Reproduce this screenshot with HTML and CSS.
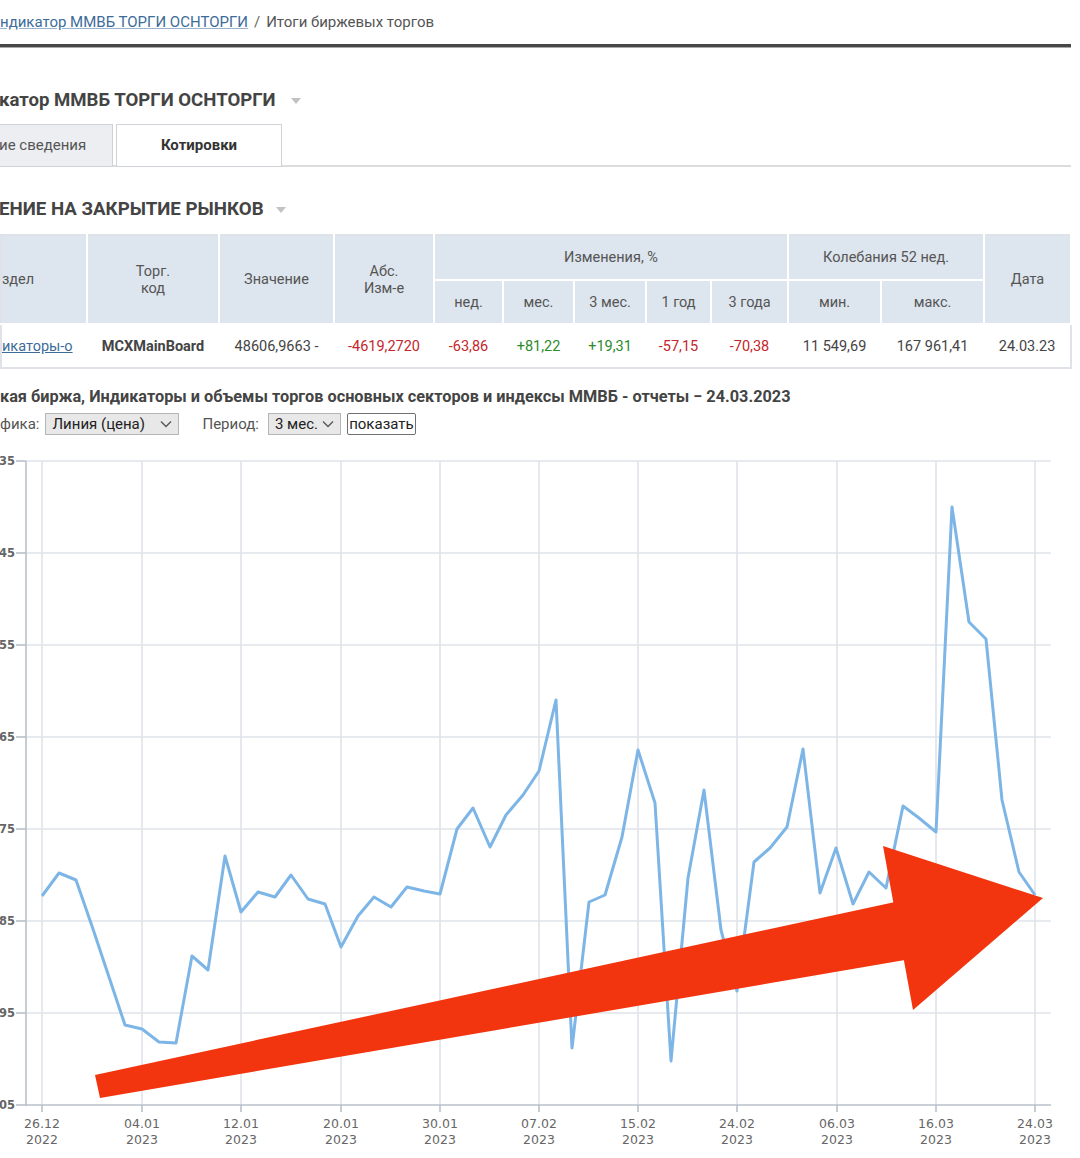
FILE: index.html
```html
<!DOCTYPE html>
<html lang="ru">
<head>
<meta charset="utf-8">
<title>Итоги биржевых торгов</title>
<link rel="stylesheet" href="styles.css">
</head>
<body>
<div class="page">
  <div class="crumbs"><a href="#" class="crumb-link">ндикатор ММВБ ТОРГИ ОСНТОРГИ</a><span class="sep">/</span><span class="crumb-cur">Итоги биржевых торгов</span></div>
  <div class="rule"></div>

  <h1 class="title">катор ММВБ ТОРГИ ОСНТОРГИ <span class="caret"></span></h1>

  <div class="tabs">
    <div class="tab">ие сведения</div>
    <div class="tab tab-active">Котировки</div>
  </div>

  <h2 class="section">ЕНИЕ НА ЗАКРЫТИЕ РЫНКОВ <span class="caret caret-sm"></span></h2>

  <table class="quotes">
    <colgroup>
      <col class="c86"><col class="c132"><col class="c115"><col class="c100"><col class="c69"><col class="c71"><col class="c72"><col class="c65"><col class="c77"><col class="c93"><col class="c103"><col class="c87">
    </colgroup>
    <thead>
      <tr class="hrow1">
        <th rowspan="2" class="first">здел</th>
        <th rowspan="2">Торг.<br>код</th>
        <th rowspan="2">Значение</th>
        <th rowspan="2">Абс.<br>Изм-е</th>
        <th colspan="5">Изменения, %</th>
        <th colspan="2">Колебания 52 нед.</th>
        <th rowspan="2">Дата</th>
      </tr>
      <tr class="hrow2">
        <th>нед.</th><th>мес.</th><th>3 мес.</th><th>1 год</th><th>3 года</th><th>мин.</th><th>макс.</th>
      </tr>
    </thead>
    <tbody>
      <tr>
        <td class="first"><a href="#" class="row-link">икаторы-о</a></td>
        <td class="bold">MCXMainBoard</td>
        <td>48606,9663 -</td>
        <td class="neg">-4619,2720</td>
        <td class="neg">-63,86</td>
        <td class="pos">+81,22</td>
        <td class="pos">+19,31</td>
        <td class="neg">-57,15</td>
        <td class="neg">-70,38</td>
        <td>11 549,69</td>
        <td>167 961,41</td>
        <td>24.03.23</td>
      </tr>
    </tbody>
  </table>

  <div class="caption">кая биржа, Индикаторы и объемы торгов основных секторов и индексы ММВБ - отчеты − 24.03.2023</div>

  <div class="controls">
    <span class="lbl">фика:</span>
    <span class="sel sel-type">Линия (цена)<svg class="chev" viewBox="0 0 12 8" width="12" height="8"><path d="M1 1.5 L6 6.5 L11 1.5" fill="none" stroke="#555" stroke-width="1.3"/></svg></span>
    <span class="lbl lbl-period">Период:</span>
    <span class="sel sel-period">3 мес.<svg class="chev" viewBox="0 0 12 8" width="12" height="8"><path d="M1 1.5 L6 6.5 L11 1.5" fill="none" stroke="#555" stroke-width="1.3"/></svg></span>
    <button class="btn" type="button">показать</button>
  </div>

  <svg class="chart" width="1080" height="718" viewBox="0 440 1080 718" xmlns="http://www.w3.org/2000/svg">
    <g stroke="#dfe4ea" stroke-width="1.6">
      <line x1="26" y1="461" x2="1051" y2="461"/>
      <line x1="26" y1="553" x2="1051" y2="553"/>
      <line x1="26" y1="645" x2="1051" y2="645"/>
      <line x1="26" y1="737" x2="1051" y2="737"/>
      <line x1="26" y1="829" x2="1051" y2="829"/>
      <line x1="26" y1="921" x2="1051" y2="921"/>
      <line x1="26" y1="1013" x2="1051" y2="1013"/>
      <line x1="42" y1="461" x2="42" y2="1105"/>
      <line x1="142" y1="461" x2="142" y2="1105"/>
      <line x1="241" y1="461" x2="241" y2="1105"/>
      <line x1="341" y1="461" x2="341" y2="1105"/>
      <line x1="440" y1="461" x2="440" y2="1105"/>
      <line x1="539" y1="461" x2="539" y2="1105"/>
      <line x1="638" y1="461" x2="638" y2="1105"/>
      <line x1="737" y1="461" x2="737" y2="1105"/>
      <line x1="837" y1="461" x2="837" y2="1105"/>
      <line x1="936" y1="461" x2="936" y2="1105"/>
      <line x1="1035" y1="461" x2="1035" y2="1105"/>
    </g>
    <g stroke="#b9c1cb" stroke-width="1.6">
      <line x1="26" y1="461" x2="26" y2="1106"/>
      <line x1="26" y1="1105" x2="1051" y2="1105"/>
      <line x1="16" y1="461" x2="26" y2="461"/>
      <line x1="16" y1="553" x2="26" y2="553"/>
      <line x1="16" y1="645" x2="26" y2="645"/>
      <line x1="16" y1="737" x2="26" y2="737"/>
      <line x1="16" y1="829" x2="26" y2="829"/>
      <line x1="16" y1="921" x2="26" y2="921"/>
      <line x1="16" y1="1013" x2="26" y2="1013"/>
      <line x1="16" y1="1105" x2="26" y2="1105"/>
      <line x1="42" y1="1105" x2="42" y2="1112"/>
      <line x1="142" y1="1105" x2="142" y2="1112"/>
      <line x1="241" y1="1105" x2="241" y2="1112"/>
      <line x1="341" y1="1105" x2="341" y2="1112"/>
      <line x1="440" y1="1105" x2="440" y2="1112"/>
      <line x1="539" y1="1105" x2="539" y2="1112"/>
      <line x1="638" y1="1105" x2="638" y2="1112"/>
      <line x1="737" y1="1105" x2="737" y2="1112"/>
      <line x1="837" y1="1105" x2="837" y2="1112"/>
      <line x1="936" y1="1105" x2="936" y2="1112"/>
      <line x1="1035" y1="1105" x2="1035" y2="1112"/>
    </g>
    <g class="ylab" text-anchor="end">
      <text x="15" y="465">35</text>
      <text x="15" y="557">45</text>
      <text x="15" y="649">55</text>
      <text x="15" y="741">65</text>
      <text x="15" y="833">75</text>
      <text x="15" y="925">85</text>
      <text x="15" y="1017">95</text>
      <text x="15" y="1109">05</text>
    </g>
    <g class="xlab" text-anchor="middle">
      <text x="42" y="1128">26.12</text><text x="42" y="1144">2022</text>
      <text x="142" y="1128">04.01</text><text x="142" y="1144">2023</text>
      <text x="241" y="1128">12.01</text><text x="241" y="1144">2023</text>
      <text x="341" y="1128">20.01</text><text x="341" y="1144">2023</text>
      <text x="440" y="1128">30.01</text><text x="440" y="1144">2023</text>
      <text x="539" y="1128">07.02</text><text x="539" y="1144">2023</text>
      <text x="638" y="1128">15.02</text><text x="638" y="1144">2023</text>
      <text x="737" y="1128">24.02</text><text x="737" y="1144">2023</text>
      <text x="837" y="1128">06.03</text><text x="837" y="1144">2023</text>
      <text x="936" y="1128">16.03</text><text x="936" y="1144">2023</text>
      <text x="1035" y="1128">24.03</text><text x="1035" y="1144">2023</text>
    </g>
    <polyline fill="none" stroke="#7db6e6" stroke-width="3" stroke-linejoin="round"
      points="42,896 59,873 76,880 93,929 109,977 125,1025 142,1029 159,1042 176,1043 192,956 208,970 225,856 241,912 258,892 275,897 291,875 308,899 325,904 341,947 358,916 374,897 391,907 407,887 424,891 440,894 457,829 473,808 490,847 506,815 523,795 539,771 556,700 572,1048 589,902 605,895 622,837 638,750 655,803 671,1061 688,878 704,790 721,930 737,991 754,862 770,848 787,827 803,749 820,893 836,848 853,904 869,872 886,888 903,806 919,818 936,832 952,507 969,622 986,639 1002,800 1019,872 1035,895"/>
    <g fill="#f2350f">
      <polygon points="95,1075 895,902 905,960 100,1098"/>
      <polygon points="883,846 1043,898 913,1010"/>
    </g>
  </svg>
</div>
</body>
</html>
```
FILE: styles.css
```css
html, body {
  margin: 0;
  padding: 0;
  background: #ffffff;
}
body {
  width: 1080px;
  overflow: hidden;
  font-family: Roboto, "Noto Sans", "Liberation Sans", sans-serif;
  color: #333333;
}
.page {
  width: 1080px;
}
.crumbs {
  height: 44px;
  line-height: 44px;
  font-size: 15px;
  color: #555555;
  white-space: nowrap;
}
.crumb-link {
  color: #3d6c99;
  text-decoration: underline;
  text-decoration-color: #9ab2cc;
}
.sep {
  margin: 0 6px;
  color: #666666;
}
.crumb-cur {
  color: #555555;
}
.rule {
  height: 3px;
  background: #474747;
  margin-right: 9px;
  box-shadow: 0 1px 0 #a9a9a9;
}
.title {
  margin: 41px 0 0 -1px;
  height: 24px;
  line-height: 24px;
  font-size: 18.6px;
  font-weight: 700;
  color: #444444;
  white-space: nowrap;
}
.caret {
  display: inline-block;
  width: 0;
  height: 0;
  border-left: 5px solid transparent;
  border-right: 5px solid transparent;
  border-top: 6px solid #c2c2c2;
  margin-left: 11px;
  vertical-align: middle;
}
.caret-sm {
  margin-left: 8px;
}
.tabs {
  margin-top: 12px;
  margin-right: 9px;
  height: 41px;
  display: flex;
  gap: 3px;
  border-bottom: 2px solid #dcdcdc;
}
.tab {
  box-sizing: border-box;
  height: 43px;
  width: 114px;
  margin-left: -1px;
  background: #eceef1;
  border: 1px solid #cfd3d8;
  border-left: none;
  line-height: 41px;
  font-size: 15px;
  color: #555555;
  white-space: nowrap;
}
.tab-active {
  width: 166px;
  margin-left: 0;
  background: #ffffff;
  border: 1px solid #cfd3d8;
  text-align: center;
  font-weight: 700;
  color: #333333;
}
.section {
  margin: 30px 0 0 -1px;
  height: 24px;
  line-height: 24px;
  font-size: 18.7px;
  font-weight: 700;
  color: #444444;
  white-space: nowrap;
}
.quotes {
  margin-top: 13px;
  width: 1071px;
  table-layout: fixed;
  border-collapse: collapse;
  font-size: 14.5px;
  border: 2px solid #dfe2e6;
}
.c86 { width: 86px; }
.c132 { width: 132px; }
.c115 { width: 115px; }
.c100 { width: 100px; }
.c69 { width: 69px; }
.c71 { width: 71px; }
.c72 { width: 72px; }
.c65 { width: 65px; }
.c77 { width: 77px; }
.c93 { width: 93px; }
.c103 { width: 103px; }
.c87 { width: 87px; }
.quotes th {
  background: #dde5ee;
  color: #555555;
  font-weight: 400;
  border: 2px solid #ffffff;
  border-top: none;
  padding: 0;
  line-height: 17px;
  text-align: center;
  vertical-align: middle;
}
.hrow1 th {
  height: 43px;
}
.hrow2 th {
  height: 42px;
}
.quotes th.first, .quotes td.first {
  text-align: left;
  border-left: none;
}
.quotes td {
  height: 42px;
  padding: 0;
  text-align: center;
  color: #444444;
  white-space: nowrap;
  background: #ffffff;
}
.row-link {
  color: #3d6c99;
  text-decoration: underline;
}
.bold {
  font-weight: 700;
}
.neg {
  color: #c4262b !important;
}
.pos {
  color: #2b8a2b !important;
}
.caption {
  margin-top: 18px;
  height: 20px;
  line-height: 20px;
  font-size: 16.3px;
  font-weight: 700;
  color: #444444;
  white-space: nowrap;
}
.controls {
  margin-top: 5px;
  height: 24px;
  display: flex;
  align-items: center;
  font-size: 15px;
  color: #555555;
  white-space: nowrap;
}
.lbl {
  margin-right: 6px;
}
.lbl-period {
  margin-left: 23px;
  margin-right: 9px;
}
.sel {
  box-sizing: border-box;
  height: 22px;
  display: inline-flex;
  align-items: center;
  justify-content: space-between;
  background: #e8e8e8;
  border: 1px solid #b5b5b5;
  color: #222222;
  font-size: 15px;
  padding: 0 6px 0 6px;
}
.sel-type {
  width: 134px;
}
.sel-period {
  width: 73px;
}
.chev {
  display: block;
}
.btn {
  box-sizing: border-box;
  margin-left: 6px;
  height: 22px;
  width: 69px;
  padding: 0;
  background: #ffffff;
  border: 1px solid #707070;
  border-radius: 2px;
  font-family: Roboto, "Noto Sans", sans-serif;
  font-size: 15px;
  color: #222222;
}
.chart {
  display: block;
  margin-top: 4px;
}
.ylab text {
  font-family: "DejaVu Sans", Verdana, sans-serif;
  font-size: 11.5px;
  font-weight: 700;
  fill: #666666;
}
.xlab text {
  font-family: "DejaVu Sans", Verdana, sans-serif;
  font-size: 12.5px;
  fill: #666666;
}
```
